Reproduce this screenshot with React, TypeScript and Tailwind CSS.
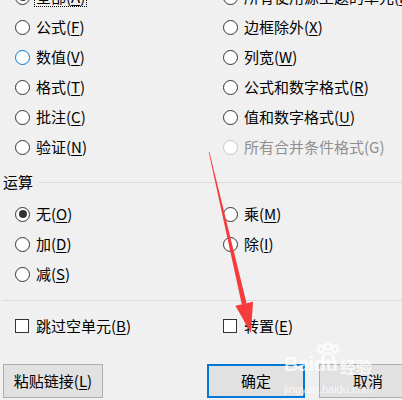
import React from "react";

type RadioProps = { checked?: boolean; state?: "normal" | "hover" | "disabled" };

function Radio({ checked, state = "normal" }: RadioProps) {
  const border =
    state === "hover" ? "border-[#0078d7]" : state === "disabled" ? "border-[#c6c6c6]" : "border-[#333333]";
  return (
    <span
      className={`relative flex h-[15px] w-[15px] shrink-0 items-center justify-center rounded-full border bg-white ${border}`}
    >
      {checked && <span className="h-[8px] w-[8px] rounded-full bg-[#333333]" />}
    </span>
  );
}

function Mn({ c }: { c: string }) {
  return (
    <>
      (<span className="underline underline-offset-[2px] decoration-1">{c}</span>)
    </>
  );
}

function Opt({
  label,
  mn,
  checked,
  state,
  focus,
}: {
  label: string;
  mn?: string;
  checked?: boolean;
  state?: "normal" | "hover" | "disabled";
  focus?: boolean;
}) {
  return (
    <div className="flex h-[30px] items-center whitespace-nowrap">
      <Radio checked={checked} state={state} />
      <span
        className={`ml-[5px] px-[1px] leading-[18px] ${state === "disabled" ? "text-[#8f8f8f]" : "text-black"} ${
          focus ? "outline outline-1 outline-dotted outline-black" : ""
        }`}
      >
        {label}
        {mn ? <Mn c={mn} /> : "(G)"}
      </span>
    </div>
  );
}

function Check({ label, mn }: { label: string; mn: string }) {
  return (
    <div className="flex h-[30px] items-center whitespace-nowrap">
      <span className="h-[14px] w-[14px] shrink-0 border border-[#333333] bg-white" />
      <span className="ml-[7px]">
        {label}
        <Mn c={mn} />
      </span>
    </div>
  );
}

export default function App() {
  return (
    <div className="relative h-[400px] w-[402px] overflow-hidden bg-[#f0f0f0] text-[15px] text-black font-['Microsoft_YaHei','Noto_Sans_CJK_SC',sans-serif]">
      <div className="mt-[-18px] grid grid-cols-[208px_1fr] pl-[15px]">
        <Opt label="全部" mn="A" checked focus />
        <Opt label="所有使用源主题的单元" mn="H" />
        <Opt label="公式" mn="F" />
        <Opt label="边框除外" mn="X" />
        <Opt label="数值" mn="V" state="hover" />
        <Opt label="列宽" mn="W" />
        <Opt label="格式" mn="T" />
        <Opt label="公式和数字格式" mn="R" />
        <Opt label="批注" mn="C" />
        <Opt label="值和数字格式" mn="U" />
        <Opt label="验证" mn="N" />
        <Opt label="所有合并条件格式" state="disabled" />
      </div>

      <div className="flex h-[40px] items-center pl-[3px]">
        <span>运算</span>
        <span className="ml-[6px] h-px flex-1 bg-[#dadada]" />
      </div>

      <div className="-mt-[3px] grid grid-cols-[208px_1fr] pl-[15px]">
        <Opt label="无" mn="O" checked />
        <Opt label="乘" mn="M" />
        <Opt label="加" mn="D" />
        <Opt label="除" mn="I" />
        <Opt label="减" mn="S" />
        <div />
      </div>

      <div className="ml-[3px] mt-[11px] h-px bg-[#dadada]" />

      <div className="mt-[10px] grid grid-cols-[208px_1fr] pl-[15px]">
        <Check label="跳过空单元" mn="B" />
        <Check label="转置" mn="E" />
      </div>

      <div className="mt-[23px] flex">
        <button className="ml-[3px] flex h-[34px] w-[100px] shrink-0 items-center justify-center border border-[#adadad] bg-[#e1e1e1]">
          粘贴链接
          <Mn c="L" />
        </button>
        <button className="ml-[104px] flex h-[34px] w-[98px] shrink-0 items-center justify-center border-2 border-[#0078d7] bg-[#e1e1e1]">
          确定
        </button>
        <button className="ml-[14px] flex h-[34px] w-[98px] shrink-0 items-center justify-center border border-[#adadad] bg-[#e1e1e1]">
          取消
        </button>
      </div>

      {/* watermark paw */}
      <svg className="pointer-events-none absolute left-[314px] top-[343px]" width="28" height="22" viewBox="0 0 28 22">
        <g fill="none" stroke="#ffffff" strokeOpacity="0.85" strokeWidth="2">
          <ellipse cx="7" cy="6" rx="3" ry="3.5" />
          <ellipse cx="14" cy="3.5" rx="3" ry="3" />
          <ellipse cx="21" cy="6" rx="3" ry="3.5" />
          <path d="M8 19 C8 13 11 10 14 10 C17 10 20 13 20 19 Z" />
        </g>
      </svg>

      {/* watermark text */}
      <div className="pointer-events-none absolute left-[284px] top-[354px] flex flex-col text-white/75">
        <div className="flex items-end leading-none">
          <span className="text-[20px] font-bold tracking-[-0.5px] font-['Liberation_Sans',sans-serif]">Bai</span>
          <span className="text-[20px] font-bold font-['Liberation_Sans',sans-serif]">du</span>
          <span className="ml-[2px] text-[16px] font-bold">经验</span>
        </div>
        <span className="mt-[10px] text-[11px] leading-none font-['Liberation_Sans',sans-serif]">jingyan.baidu.com</span>
      </div>

      {/* red arrow */}
      <svg className="pointer-events-none absolute left-0 top-0" width="402" height="400">
        <polygon points="208.7,152 209.4,152 246.6,303.2 241.8,304.4" fill="#f53b3b" />
        <polygon points="253,301.8 235.4,305.8 251,333" fill="#f53b3b" />
      </svg>
    </div>
  );
}
